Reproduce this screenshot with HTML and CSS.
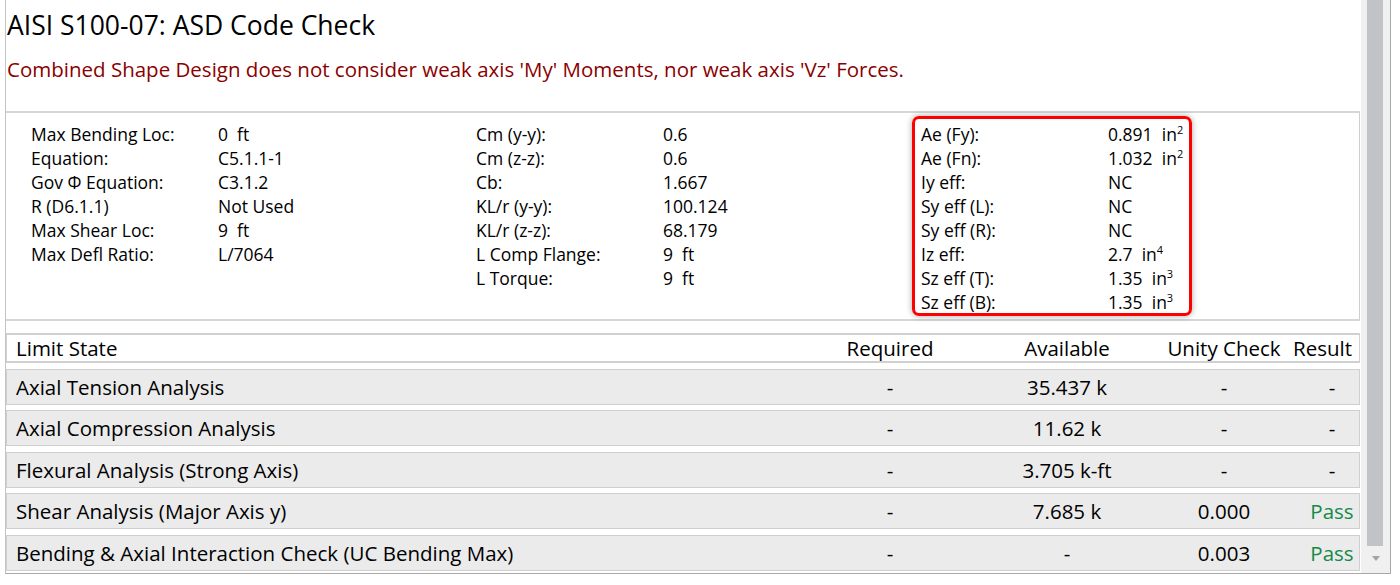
FILE: index.html
```html
<!DOCTYPE html>
<html>
<head>
<meta charset="utf-8">
<link rel="stylesheet" href="styles.css">
</head>
<body>
<div class="frame">
  <div class="content">
    <h1 class="title">AISI S100-07: ASD Code Check</h1>
    <p class="warning">Combined Shape Design does not consider weak axis 'My' Moments, nor weak axis 'Vz' Forces.</p>

    <div class="props">
      <div class="col">
        <div class="prow"><span class="lbl">Max Bending Loc:</span><span class="val">0  ft</span></div>
        <div class="prow"><span class="lbl">Equation:</span><span class="val">C5.1.1-1</span></div>
        <div class="prow"><span class="lbl">Gov Φ Equation:</span><span class="val">C3.1.2</span></div>
        <div class="prow"><span class="lbl">R (D6.1.1)</span><span class="val">Not Used</span></div>
        <div class="prow"><span class="lbl">Max Shear Loc:</span><span class="val">9  ft</span></div>
        <div class="prow"><span class="lbl">Max Defl Ratio:</span><span class="val">L/7064</span></div>
      </div>
      <div class="col">
        <div class="prow"><span class="lbl">Cm (y-y):</span><span class="val">0.6</span></div>
        <div class="prow"><span class="lbl">Cm (z-z):</span><span class="val">0.6</span></div>
        <div class="prow"><span class="lbl">Cb:</span><span class="val">1.667</span></div>
        <div class="prow"><span class="lbl">KL/r (y-y):</span><span class="val">100.124</span></div>
        <div class="prow"><span class="lbl">KL/r (z-z):</span><span class="val">68.179</span></div>
        <div class="prow"><span class="lbl">L Comp Flange:</span><span class="val">9  ft</span></div>
        <div class="prow"><span class="lbl">L Torque:</span><span class="val">9  ft</span></div>
      </div>
      <div class="col">
        <div class="prow"><span class="lbl">Ae (Fy):</span><span class="val">0.891  in<sup class="sup">2</sup></span></div>
        <div class="prow"><span class="lbl">Ae (Fn):</span><span class="val">1.032  in<sup class="sup">2</sup></span></div>
        <div class="prow"><span class="lbl">Iy eff:</span><span class="val">NC</span></div>
        <div class="prow"><span class="lbl">Sy eff (L):</span><span class="val">NC</span></div>
        <div class="prow"><span class="lbl">Sy eff (R):</span><span class="val">NC</span></div>
        <div class="prow"><span class="lbl">Iz eff:</span><span class="val">2.7  in<sup class="sup">4</sup></span></div>
        <div class="prow"><span class="lbl">Sz eff (T):</span><span class="val">1.35  in<sup class="sup">3</sup></span></div>
        <div class="prow"><span class="lbl">Sz eff (B):</span><span class="val">1.35  in<sup class="sup">3</sup></span></div>
      </div>
      <div class="highlight"></div>
    </div>

    <div class="table">
      <div class="trow head">
        <div class="c-label">Limit State</div>
        <div class="c-mid">Required</div>
        <div class="c-mid">Available</div>
        <div class="c-mid">Unity Check</div>
        <div class="c-res-head">Result</div>
      </div>
      <div class="trow">
        <div class="c-label">Axial Tension Analysis</div>
        <div class="c-mid">-</div>
        <div class="c-mid">35.437 k</div>
        <div class="c-mid">-</div>
        <div class="c-res">-</div>
      </div>
      <div class="trow">
        <div class="c-label">Axial Compression Analysis</div>
        <div class="c-mid">-</div>
        <div class="c-mid">11.62 k</div>
        <div class="c-mid">-</div>
        <div class="c-res">-</div>
      </div>
      <div class="trow">
        <div class="c-label">Flexural Analysis (Strong Axis)</div>
        <div class="c-mid">-</div>
        <div class="c-mid">3.705 k-ft</div>
        <div class="c-mid">-</div>
        <div class="c-res">-</div>
      </div>
      <div class="trow">
        <div class="c-label">Shear Analysis (Major Axis y)</div>
        <div class="c-mid">-</div>
        <div class="c-mid">7.685 k</div>
        <div class="c-mid">0.000</div>
        <div class="c-res pass">Pass</div>
      </div>
      <div class="trow">
        <div class="c-label">Bending &amp; Axial Interaction Check (UC Bending Max)</div>
        <div class="c-mid">-</div>
        <div class="c-mid">-</div>
        <div class="c-mid">0.003</div>
        <div class="c-res pass">Pass</div>
      </div>
    </div>
  </div>
  <div class="scrollbar">
    <div class="thumb"></div>
    <div class="arrow"></div>
  </div>
</div>
</body>
</html>
```

FILE: styles.css
```css
html, body {
  margin: 0;
  padding: 0;
  background: #ffffff;
}
body {
  font-family: "Open Sans", "Noto Sans", sans-serif;
  color: #000000;
}
.frame {
  display: flex;
  margin-left: 5px;
  width: 1386px;
  height: 574px;
  box-sizing: border-box;
  border-left: 1px solid #c4c4c4;
  border-right: 1px solid #a8a8a8;
  border-bottom: 1px solid #a8a8a8;
  overflow: hidden;
}
.content {
  flex: 1;
  padding-right: 1px;
  overflow: hidden;
}
.title {
  margin: 8px 0 0 1px;
  font-size: 26.5px;
  font-weight: 400;
  line-height: 34px;
}
.warning {
  margin: 14px 0 0 1px;
  font-size: 20.5px;
  line-height: 26px;
  color: #8b0000;
}
.props {
  position: relative;
  margin-top: 29px;
  height: 210px;
  box-sizing: border-box;
  border-top: 2px solid #d6d6d6;
  border-bottom: 2px solid #d6d6d6;
  border-right: 1px solid #cfcfcf;
  padding: 9px 0 0 25px;
  display: grid;
  grid-template-columns: 445px 445px 1fr;
  font-size: 17.5px;
}
.prow {
  display: flex;
  height: 24px;
  line-height: 24px;
}
.lbl {
  width: 187px;
  flex: none;
  white-space: nowrap;
}
.val {
  white-space: pre;
}
.sup {
  font-size: 11px;
  line-height: 0;
  vertical-align: 7px;
}
.highlight {
  position: absolute;
  left: 906px;
  top: 3px;
  width: 280px;
  height: 200px;
  box-sizing: border-box;
  border: 3px solid #ff0000;
  border-radius: 7px;
  box-shadow: 0 0 6px rgba(0, 0, 0, 0.35);
}
.table {
  margin-top: 12px;
  font-size: 20.5px;
}
.trow {
  display: grid;
  grid-template-columns: 1fr 170px 184px 130px 70px;
  box-sizing: border-box;
  height: 36px;
  line-height: 32px;
  padding-top: 1px;
  background: #ebebeb;
  border: 1px solid #cfcfcf;
  margin-top: 5.5px;
}
.trow.head {
  height: 30px;
  line-height: 26px;
  padding-top: 0;
  margin-top: 0;
  background: #ffffff;
  border: 1px solid #d0d0d0;
  border-top-width: 2px;
  border-bottom-width: 2px;
}
.c-label {
  padding-left: 9px;
  white-space: nowrap;
}
.c-mid {
  text-align: center;
  white-space: nowrap;
}
.c-res {
  text-align: center;
  padding-left: 16px;
}
.c-res-head {
  text-align: right;
  padding-right: 7px;
  white-space: nowrap;
}
.pass {
  color: #138a48;
}
.scrollbar {
  width: 29px;
  flex: none;
  background: #f0f0f0;
  position: relative;
}
.thumb {
  margin-left: 6px;
  width: 16px;
  height: 546px;
  background: #c2c3c7;
}
.arrow {
  margin: 10px 0 0 11px;
  width: 0;
  height: 0;
  border-left: 4px solid transparent;
  border-right: 4px solid transparent;
  border-top: 5px solid #a3a3a3;
}
```
